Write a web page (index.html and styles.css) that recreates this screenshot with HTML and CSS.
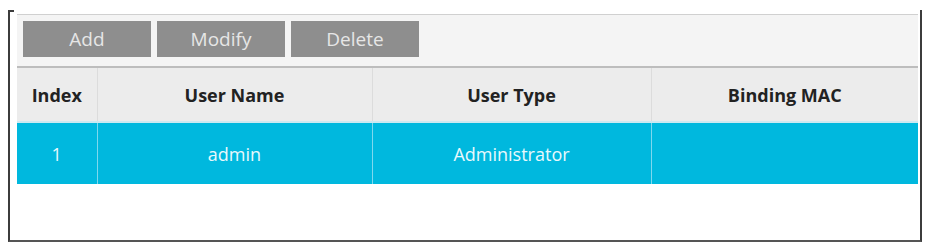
FILE: index.html
```html
<!DOCTYPE html>
<html lang="en">
<head>
    <meta charset="UTF-8">
    <title>User Management</title>
    <link rel="stylesheet" href="styles.css">
</head>
<body>
    <div class="frame">
        <div class="panel">
            <div class="toolbar">
                <button class="btn">Add</button>
                <button class="btn">Modify</button>
                <button class="btn">Delete</button>
            </div>
            <table class="users">
                <colgroup>
                    <col class="c-index">
                    <col class="c-name">
                    <col class="c-type">
                    <col>
                </colgroup>
                <thead>
                    <tr>
                        <th>Index</th>
                        <th>User Name</th>
                        <th>User Type</th>
                        <th>Binding MAC</th>
                    </tr>
                </thead>
                <tbody>
                    <tr class="selected">
                        <td>1</td>
                        <td>admin</td>
                        <td>Administrator</td>
                        <td></td>
                    </tr>
                </tbody>
            </table>
        </div>
    </div>
</body>
</html>
```

FILE: styles.css
```css
body {
    margin: 0;
    background-color: #fff;
    font-family: "Open Sans", "Liberation Sans", sans-serif;
}
.frame {
    position: relative;
    margin: 10px 0 0 8px;
    width: 914px;
    height: 232px;
    border-left: 2px solid #3c3c3c;
    border-right: 2px solid #3c3c3c;
    border-bottom: 2px solid #555;
    padding: 4px 2px 0 7px;
    box-sizing: border-box;
}
.frame::before {
    content: "";
    position: absolute;
    left: -1px;
    top: 0;
    width: 5px;
    border-top: 2px solid #3c3c3c;
}
.panel {
    border-top: 1px solid #d0d0d0;
}
.toolbar {
    display: flex;
    gap: 6px;
    padding: 6px 6px 9px;
    background-color: #f4f4f4;
    border-bottom: 2px solid #bdbdbd;
}
.btn {
    width: 128px;
    height: 36px;
    border: none;
    background-color: #8e8e8e;
    color: #e6e6e6;
    font-family: inherit;
    font-size: 19px;
    padding: 0;
}
.users {
    width: 100%;
    border-collapse: collapse;
    table-layout: fixed;
}
.c-index { width: 80px; }
.c-name { width: 275px; }
.c-type { width: 279px; }
.users th {
    height: 53px;
    padding: 0;
    background-color: #ececec;
    color: #222;
    font-size: 18px;
    font-weight: bold;
    border-left: 1px solid #dcdcdc;
    border-bottom: 2px solid #cde9f1;
}
.users th:first-child,
.users td:first-child {
    border-left: none;
}
.users td {
    height: 61px;
    padding: 0;
    text-align: center;
    font-size: 18px;
}
.selected td {
    background-color: #00b8de;
    color: #e9f8fc;
    border-left: 1px solid #7fd8ee;
}
```
